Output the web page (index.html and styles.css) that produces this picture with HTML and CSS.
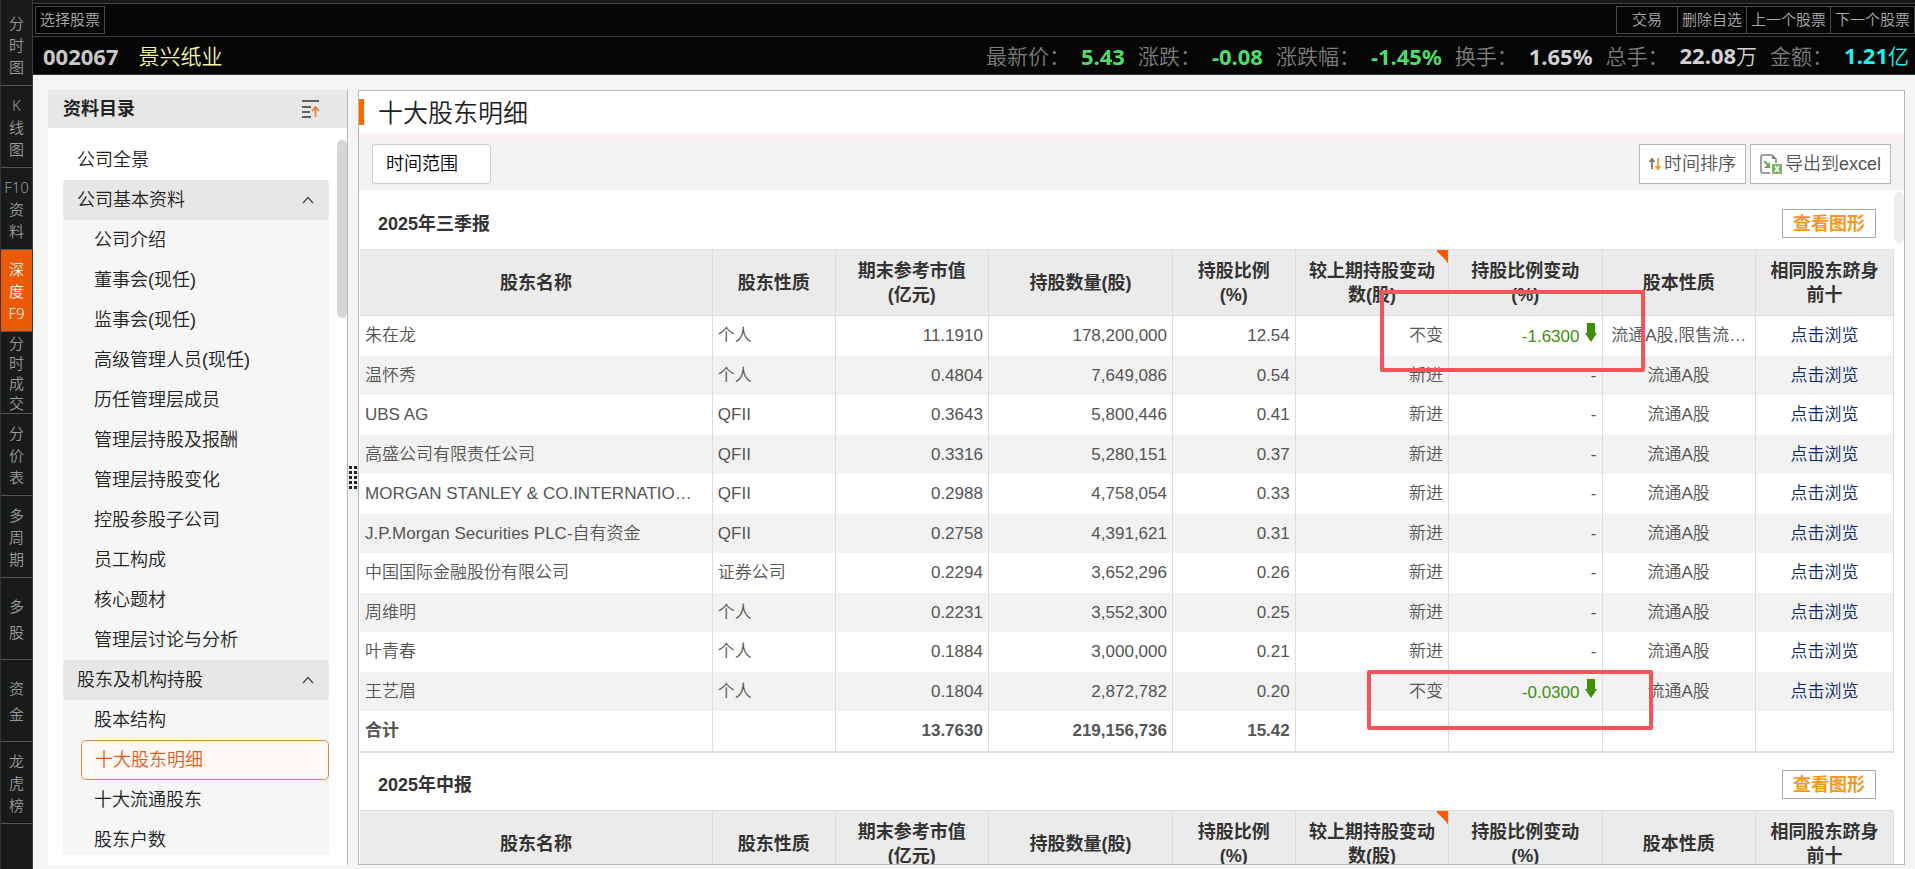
FILE: index.html
```html
<!DOCTYPE html>
<html lang="zh-CN">
<head>
    <meta charset="UTF-8">
    <meta name="viewport" content="width=device-width, initial-scale=1.0">
    <title>景兴纸业 - 十大股东明细</title>
    <link rel="stylesheet" href="styles.css">
</head>
<body>
    <nav class="rail">
        <a href="#">分<br>时<br>图</a>
        <a href="#">K<br>线<br>图</a>
        <a href="#">F10<br>资<br>料</a>
        <a href="#" class="active">深<br>度<br>F9</a>
        <a href="#" class="tight">分<br>时<br>成<br>交</a>
        <a href="#">分<br>价<br>表</a>
        <a href="#">多<br>周<br>期</a>
        <a href="#" class="loose">多<br>股</a>
        <a href="#" class="loose">资<br>金</a>
        <a href="#">龙<br>虎<br>榜</a>
    </nav>
    <div class="app">
        <div class="topbar">
            <button class="pick">选择股票</button>
            <div class="top-actions">
                <button class="trade">交易</button>
                <button>删除自选</button>
                <button>上一个股票</button>
                <button>下一个股票</button>
            </div>
        </div>
        <header class="quote">
            <strong class="code">002067</strong>
            <span class="name">景兴纸业</span>
            <dl>
                <div><dt>最新价：</dt><dd class="down">5.43</dd></div>
                <div><dt>涨跌：</dt><dd class="down">-0.08</dd></div>
                <div><dt>涨跌幅：</dt><dd class="down">-1.45%</dd></div>
                <div><dt>换手：</dt><dd>1.65%</dd></div>
                <div><dt>总手：</dt><dd>22.08<small>万</small></dd></div>
                <div><dt>金额：</dt><dd class="amount">1.21<small>亿</small></dd></div>
            </dl>
        </header>
        <main>
            <aside class="sidebar">
                <div class="sidebar-head">
                    <h2>资料目录</h2>
                    <button aria-label="收起">
                        <svg width="18" height="20" viewBox="0 0 18 20" fill="none" stroke-width="1.5">
                            <path d="M0 2h17M0 8h9M0 13h8M0 18h9" stroke="#333"/>
                            <path d="M13.500 18V8M10 12l3.500-4 3.500 4" stroke="#f07a1e"/>
                        </svg>
                    </button>
                </div>
                <div class="menu">
                    <a href="#" class="top">公司全景</a>
                    <button class="group">公司基本资料
                        <svg width="12" height="8" viewBox="0 0 12 8" fill="none" stroke="#444" stroke-width="1.2"><path d="M1 7l5-5.500L11 7"/></svg>
                    </button>
                    <div class="sub">
                        <a href="#">公司介绍</a>
                        <a href="#">董事会(现任)</a>
                        <a href="#">监事会(现任)</a>
                        <a href="#">高级管理人员(现任)</a>
                        <a href="#">历任管理层成员</a>
                        <a href="#">管理层持股及报酬</a>
                        <a href="#">管理层持股变化</a>
                        <a href="#">控股参股子公司</a>
                        <a href="#">员工构成</a>
                        <a href="#">核心题材</a>
                        <a href="#">管理层讨论与分析</a>
                    </div>
                    <button class="group">股东及机构持股
                        <svg width="12" height="8" viewBox="0 0 12 8" fill="none" stroke="#444" stroke-width="1.2"><path d="M1 7l5-5.500L11 7"/></svg>
                    </button>
                    <div class="sub">
                        <a href="#">股本结构</a>
                        <a href="#" class="current">十大股东明细</a>
                        <a href="#">十大流通股东</a>
                        <a href="#">股东户数</a>
                    </div>
                </div>
                <div class="thumb"></div>
            </aside>
            <div class="splitter"><i></i></div>
            <section class="content">
                <h1>十大股东明细</h1>
                <div class="toolbar">
                    <input type="text" class="range" placeholder="时间范围" aria-label="时间范围">
                    <button class="sort">
                        <svg width="12" height="14" viewBox="0 0 12 14" fill="none" stroke-width="1.8">
                            <path d="M3 12V2M.5 5L3 2l2.500 3" stroke="#777"/>
                            <path d="M9 1v11M6.500 9L9 12l2.500-3" stroke="#f39a2b"/>
                        </svg>时间排序
                    </button>
                    <button class="excel">
                        <svg width="22" height="21" viewBox="0 0 22 21" fill="none">
                            <path d="M10 19H3a2 2 0 0 1-2-2V3a2 2 0 0 1 2-2h9l4 4v4" stroke="#808080" stroke-width="1.5"/>
                            <path d="M12 1v4h4z" fill="#808080"/>
                            <path d="M4 7l5 5" stroke="#6fa556" stroke-width="1.8"/>
                            <path d="M10 8v6H4z" fill="#6fa556"/>
                            <rect x="12" y="10" width="10" height="10" fill="#7fb562"/>
                            <path d="M15 12l4 6M19 12l-4 6" stroke="#fff" stroke-width="1.5"/>
                        </svg>导出到excel
                    </button>
                </div>
                <div class="reports">
                    <div class="report-head">
                        <h3>2025年三季报</h3>
                        <button class="chart">查看图形</button>
                    </div>
                    <table>
                        <colgroup>
                            <col class="w-name"><col class="w-8"><col class="w-10"><col class="w-12"><col class="w-8">
                            <col class="w-10"><col class="w-10"><col class="w-10"><col class="w-9">
                        </colgroup>
                        <thead>
                            <tr>
                                <th>股东名称</th><th>股东性质</th><th>期末参考市值<br>(亿元)</th><th>持股数量(股)</th><th>持股比例<br>(%)</th>
                                <th class="flag">较上期持股变动<br>数(股)</th><th>持股比例变动<br>(%)</th><th>股本性质</th><th>相同股东跻身<br>前十</th>
                            </tr>
                        </thead>
                        <tbody>
                            <tr><td>朱在龙</td><td>个人</td><td>11.1910</td><td>178,200,000</td><td>12.54</td><td>不变</td><td class="fall">-1.6300<svg width="12" height="19" viewBox="0 0 12 19"><path d="M2 0h8v10h2l-6 9-6-9h2z"/></svg></td><td>流通A股,限售流…</td><td><a href="#">点击浏览</a></td></tr>
                            <tr><td>温怀秀</td><td>个人</td><td>0.4804</td><td>7,649,086</td><td>0.54</td><td>新进</td><td>-</td><td>流通A股</td><td><a href="#">点击浏览</a></td></tr>
                            <tr><td>UBS AG</td><td>QFII</td><td>0.3643</td><td>5,800,446</td><td>0.41</td><td>新进</td><td>-</td><td>流通A股</td><td><a href="#">点击浏览</a></td></tr>
                            <tr><td>高盛公司有限责任公司</td><td>QFII</td><td>0.3316</td><td>5,280,151</td><td>0.37</td><td>新进</td><td>-</td><td>流通A股</td><td><a href="#">点击浏览</a></td></tr>
                            <tr><td>MORGAN STANLEY &amp; CO.INTERNATIO…</td><td>QFII</td><td>0.2988</td><td>4,758,054</td><td>0.33</td><td>新进</td><td>-</td><td>流通A股</td><td><a href="#">点击浏览</a></td></tr>
                            <tr><td>J.P.Morgan Securities PLC-自有资金</td><td>QFII</td><td>0.2758</td><td>4,391,621</td><td>0.31</td><td>新进</td><td>-</td><td>流通A股</td><td><a href="#">点击浏览</a></td></tr>
                            <tr><td>中国国际金融股份有限公司</td><td>证券公司</td><td>0.2294</td><td>3,652,296</td><td>0.26</td><td>新进</td><td>-</td><td>流通A股</td><td><a href="#">点击浏览</a></td></tr>
                            <tr><td>周维明</td><td>个人</td><td>0.2231</td><td>3,552,300</td><td>0.25</td><td>新进</td><td>-</td><td>流通A股</td><td><a href="#">点击浏览</a></td></tr>
                            <tr><td>叶青春</td><td>个人</td><td>0.1884</td><td>3,000,000</td><td>0.21</td><td>新进</td><td>-</td><td>流通A股</td><td><a href="#">点击浏览</a></td></tr>
                            <tr><td>王艺眉</td><td>个人</td><td>0.1804</td><td>2,872,782</td><td>0.20</td><td>不变</td><td class="fall">-0.0300<svg width="12" height="19" viewBox="0 0 12 19"><path d="M2 0h8v10h2l-6 9-6-9h2z"/></svg></td><td>流通A股</td><td><a href="#">点击浏览</a></td></tr>
                            <tr class="total"><td>合计</td><td></td><td>13.7630</td><td>219,156,736</td><td>15.42</td><td></td><td></td><td></td><td></td></tr>
                        </tbody>
                    </table>
                    <div class="report-head">
                        <h3>2025年中报</h3>
                        <button class="chart">查看图形</button>
                    </div>
                    <table>
                        <colgroup>
                            <col class="w-name"><col class="w-8"><col class="w-10"><col class="w-12"><col class="w-8">
                            <col class="w-10"><col class="w-10"><col class="w-10"><col class="w-9">
                        </colgroup>
                        <thead>
                            <tr>
                                <th>股东名称</th><th>股东性质</th><th>期末参考市值<br>(亿元)</th><th>持股数量(股)</th><th>持股比例<br>(%)</th>
                                <th class="flag">较上期持股变动<br>数(股)</th><th>持股比例变动<br>(%)</th><th>股本性质</th><th>相同股东跻身<br>前十</th>
                            </tr>
                        </thead>
                    </table>
                    <div class="thumb"></div>
                    <div class="mark mark-first"></div>
                    <div class="mark mark-last"></div>
                </div>
            </section>
        </main>
    </div>
</body>
</html>
```

FILE: styles.css
```css
:root {
    --sans: "Liberation Sans", "Noto Sans CJK SC", sans-serif;
    --ui: "Noto Sans", "Noto Sans CJK SC", sans-serif;
    --page: #f5f5f5;
    --line: #b8b8b8;
    --orange: #ff6a00;
    --mark: #f4555a;
}
* {
    box-sizing: border-box;
    margin: 0;
    padding: 0;
}
body {
    display: flex;
    height: 100vh;
    overflow: hidden;
    font-family: var(--sans);
    font-size: 18px;
    font-weight: 350;
    line-height: 24px;
    color: #222;
    background: var(--page);
}
a {
    color: inherit;
    text-decoration: none;
}
button, input {
    font: inherit;
    color: inherit;
    background: none;
    border: none;
}
button {
    cursor: pointer;
    white-space: nowrap;
}

/* left rail */
.rail {
    flex: none;
    width: 33px;
    padding-top: 4px;
    background: #191a1a;
    border-left: 1px solid #333;
    border-right: 1px solid #3c3c3c;
}
.rail a {
    display: flex;
    align-items: center;
    justify-content: center;
    height: 82px;
    border-bottom: 1px solid #555;
    font-family: var(--ui);
    font-size: 15px;
    line-height: 22px;
    text-align: center;
    color: #999;
}
.rail .tight {
    line-height: 20px;
}
.rail .loose {
    line-height: 26px;
}
.rail .active {
    background: #ec5a05;
    color: #fff;
}

.app {
    flex: 1;
    min-width: 0;
    display: flex;
    flex-direction: column;
}

/* top bars */
.topbar {
    display: flex;
    justify-content: space-between;
    align-items: center;
    height: 37px;
    padding: 3px 0 3px 2px;
    background: #050505;
    border-top: 3px solid #191919;
    border-bottom: 1px solid #3c3c3c;
    box-shadow: inset 0 1px #444;
    font-size: 15px;
    color: #aaa;
}
.topbar button {
    height: 28px;
    padding: 0 4px;
    border: 1px solid #4a4a4a;
}
.top-actions {
    display: flex;
}
.top-actions button + button {
    border-left: none;
}
.top-actions .trade {
    padding: 0 15px;
}
.quote {
    display: flex;
    align-items: center;
    height: 38px;
    padding: 0 6px 0 10px;
    background: #050505;
    border-bottom: 1px solid #333;
    font-family: var(--ui);
    font-size: 21px;
    white-space: nowrap;
}
.quote .code {
    font-size: 22px;
    font-weight: bold;
    color: #c8c8c8;
}
.quote .name {
    margin-left: 20px;
    color: #f5f5a5;
}
.quote dl {
    display: flex;
    gap: 13px;
    margin-left: auto;
}
.quote dl div {
    display: flex;
    align-items: center;
    gap: 11px;
}
.quote dt {
    color: #7c7c7c;
}
.quote dd {
    font-size: 22px;
    font-weight: bold;
    color: #d4d0d4;
}
.quote small {
    font-size: 21px;
    font-weight: 350;
}
.quote .down {
    color: #4fdc6c;
}
.quote .amount {
    color: #1cf0f0;
}

main {
    flex: 1;
    min-height: 0;
    display: flex;
    padding: 15px 10px 4px 15px;
}

/* sidebar */
.sidebar {
    position: relative;
    flex: none;
    width: 300px;
    background: #fff;
    border-right: 1px solid var(--line);
    overflow: hidden;
}
.sidebar-head {
    display: flex;
    justify-content: space-between;
    align-items: center;
    height: 38px;
    padding: 0 27px 0 15px;
    background: #e7e7e7;
}
.sidebar-head h2 {
    font-size: 18px;
}
.sidebar-head button {
    display: flex;
}
.menu {
    padding: 12px 18px 0 15px;
}
.menu a,
.menu .group {
    display: flex;
    align-items: center;
    width: 100%;
    height: 40px;
    padding-left: 14px;
}
.menu .group {
    justify-content: space-between;
    padding-right: 15px;
    background: #e7e7e7;
    border-radius: 4px;
}
.sub {
    padding-left: 18px;
    background: #f6f6f6;
}
.menu .sub a {
    padding-left: 13px;
}
.menu .sub .current {
    color: #e0601a;
    background: #fff8f4;
    border: 1px solid #d98a45;
    border-radius: 5px;
}
.sub:last-child {
    height: 155px;
}
.thumb {
    position: absolute;
    border-radius: 5px;
}
.sidebar .thumb {
    top: 50px;
    right: 0;
    width: 10px;
    height: 178px;
    background: #d6d6da;
}
.splitter {
    flex: none;
    display: flex;
    align-items: center;
    justify-content: center;
    width: 10px;
}
.splitter i {
    width: 8px;
    height: 23px;
    background: conic-gradient(from 270deg at 3px 3px, #222 90deg, transparent 0) 0 0 / 5px 5px;
}

/* content */
.content {
    flex: 1;
    min-width: 0;
    display: flex;
    flex-direction: column;
    background: #fff;
    border: 1px solid var(--line);
}
.content h1 {
    flex: none;
    margin: 8px 0;
    height: 26px;
    padding-left: 14px;
    border-left: 5px solid var(--orange);
    font-size: 25px;
    font-weight: 350;
    line-height: 28px;
}
.toolbar {
    flex: none;
    display: flex;
    align-items: center;
    gap: 4px;
    height: 57px;
    padding: 5px 13px 0 13px;
    background: #f2f2f2;
    border-top: 5px solid #fdf0ee;
}
.toolbar > * {
    height: 40px;
    margin-bottom: 5px;
    background: #fff;
    border: 1px solid var(--line);
}
.range {
    width: 119px;
    margin-right: auto;
    padding: 0 13px;
    border-color: #ccc;
    border-radius: 3px;
}
.range::placeholder {
    color: #000;
    opacity: 1;
}
.toolbar button {
    display: flex;
    align-items: center;
    justify-content: center;
    gap: 3px;
    padding: 0 9px;
    color: #555;
}
.reports {
    position: relative;
    flex: 1;
    min-height: 0;
    padding: 2px 10px 0 1px;
    overflow: hidden;
}
.report-head {
    display: flex;
    justify-content: space-between;
    align-items: center;
    height: 57px;
    padding: 6px 18px 0 18px;
}
.report-head h3 {
    font-size: 18px;
    color: #333;
}
.chart {
    height: 29px;
    padding: 0 10px;
    border: 1px solid #aaa;
    font-weight: bold;
    color: #f8961e;
}
table {
    width: 100%;
    table-layout: fixed;
    border-collapse: separate;
    border-spacing: 0;
    border-top: 1px solid #ddd;
    white-space: nowrap;
}
.w-name {
    width: 23%;
}
.w-8 {
    width: 8%;
}
.w-9 {
    width: 9%;
}
.w-10 {
    width: 10%;
}
.w-12 {
    width: 12%;
}
th, td {
    border-right: 1px solid #dcdcdc;
}
th {
    height: 66px;
    background: #ebebeb;
    border-bottom: 1px solid #ddd;
    color: #333;
}
.flag {
    background: linear-gradient(48deg, transparent 50%, #ff5a00 50%) right top / 12px 13px no-repeat #ebebeb;
}
td {
    height: 40px;
    padding: 0 5px;
    font-size: 17px;
    color: #555;
    text-align: right;
}
td:nth-child(-n+2) {
    text-align: left;
}
td:nth-child(n+8) {
    text-align: center;
}
td a {
    color: #0a2870;
}
tr:nth-child(even) td {
    height: 39px;
    background: #f2f2f2;
}
td.fall {
    color: #3f8f10;
}
.fall svg {
    margin-left: 5px;
    fill: #3f8f00;
}
.total td {
    height: 42px;
    border-bottom: 2px solid #ddd;
    font-weight: bold;
}
.reports .thumb {
    top: 2px;
    right: 0;
    width: 10px;
    height: 51px;
    background: #eee;
}

/* highlight frames drawn over the table */
.mark {
    position: absolute;
    border: 4px solid var(--mark);
    border-radius: 2px;
}
.mark-first {
    top: 100px;
    right: 259px;
    width: 265px;
    height: 82px;
}
.mark-last {
    top: 480px;
    right: 251px;
    width: 286px;
    height: 60px;
}
```
